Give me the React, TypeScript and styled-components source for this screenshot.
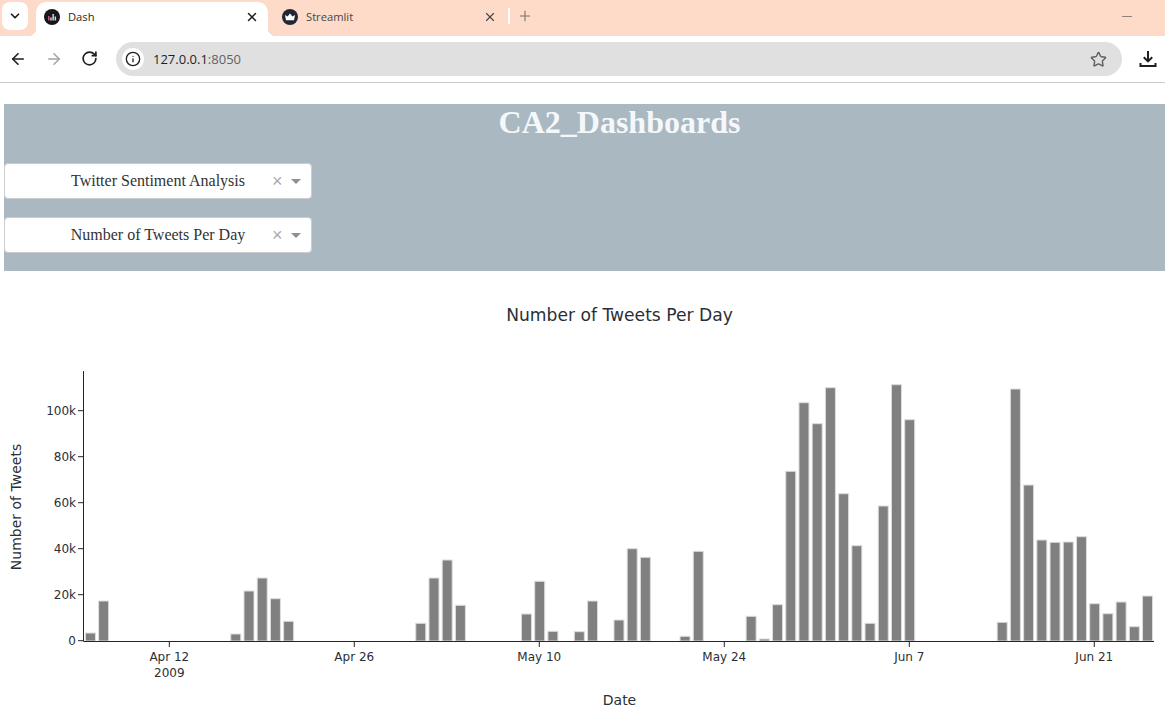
import React from 'react'
import styled, { createGlobalStyle } from 'styled-components'
import { ArrowLeft, ArrowRight, ChevronDown, Info, Plus, RotateCw, Star, X } from 'lucide-react'

const GlobalStyle = createGlobalStyle`
  html,
  body {
    margin: 0;
    padding: 0;
    height: 716px;
    overflow: hidden;
    background: #fff;
  }
`

const PEACH = '#fddbc8'

const Window = styled.div`
  width: 1165px;
  height: 716px;
  display: flex;
  flex-direction: column;
  overflow: hidden;
`

const TabStrip = styled.div`
  height: 36px;
  flex: none;
  display: flex;
  align-items: flex-end;
  padding-left: 2px;
  background: ${PEACH};
  color: #3c3c3c;
`

const TabSearch = styled.div`
  width: 26px;
  height: 28px;
  margin: 0 8px 6px 0;
  display: flex;
  align-items: center;
  justify-content: center;
  border-radius: 8px;
  background: #fff;
  color: #1f1f1f;
`

const Tab = styled.div<{ $active?: boolean }>`
  position: relative;
  width: ${({ $active }) => ($active ? '232px' : '240px')};
  height: 34px;
  display: flex;
  align-items: center;
  padding: 0 ${({ $active }) => ($active ? '9px' : '11px')} 4px ${({ $active }) => ($active ? '8px' : '14px')};
  box-sizing: border-box;
  border-radius: 10px 10px 0 0;
  background: ${({ $active }) => ($active ? '#fff' : 'transparent')};
  color: ${({ $active }) => ($active ? '#1f1f1f' : '#474747')};

  ${({ $active }) =>
    $active &&
    `
    &::before,
    &::after {
      content: '';
      position: absolute;
      bottom: 0;
      width: 8px;
      height: 8px;
    }
    &::before {
      left: -8px;
      background: radial-gradient(circle at 0 0, ${PEACH} 8px, #fff 8.5px);
    }
    &::after {
      right: -8px;
      background: radial-gradient(circle at 100% 0, ${PEACH} 8px, #fff 8.5px);
    }
  `}
`

const TabTitle = styled.span`
  flex: 1;
  margin-left: 8px;
  font: 11.2px/16px 'Open Sans', 'Noto Sans', sans-serif;
`

const TabClose = styled.span`
  display: flex;
  color: inherit;
`

const TabDivider = styled.div`
  width: 2px;
  height: 16px;
  margin: 0 7px 12px 0;
  background: #fff;
`

const NewTab = styled.div`
  display: flex;
  margin-bottom: 12px;
  color: #7b706a;
`

const MinimizeGlyph = styled.div`
  width: 10px;
  height: 1px;
  margin: 0 33px 19px auto;
  background: #8f8580;
`

const Toolbar = styled.div`
  height: 47px;
  flex: none;
  display: flex;
  align-items: center;
  padding-left: 9px;
  box-sizing: border-box;
  border-bottom: 1px solid #cdcdcd;
  background: #fff;
`

const NavButton = styled.div<{ $muted?: boolean }>`
  width: 18px;
  height: 18px;
  margin-right: 18px;
  display: flex;
  color: ${({ $muted }) => ($muted ? '#a3a3a3' : '#1f1f1f')};
`

const Omnibox = styled.div`
  width: 1006px;
  height: 34px;
  margin-left: -1px;
  display: flex;
  align-items: center;
  padding: 0 15px 0 6px;
  box-sizing: border-box;
  border-radius: 17px;
  background: #e0e0e0;
`

const SiteInfo = styled.div`
  width: 22px;
  height: 22px;
  display: flex;
  align-items: center;
  justify-content: center;
  border-radius: 50%;
  background: #fff;
  color: #1f1f1f;
`

const Url = styled.div`
  flex: 1;
  margin-left: 9px;
  font: 13px/18px 'Open Sans', 'Noto Sans', sans-serif;
  color: #1f1f1f;

  span {
    color: #5f6368;
  }
`

const DownloadButton = styled.div`
  width: 20px;
  height: 20px;
  margin-left: 16px;
  display: flex;
  color: #1f1f1f;
`

const Page = styled.div`
  flex: 1;
  padding: 21px 0 0 4px;
`

const Banner = styled.div`
  height: 167px;
  padding-bottom: 18px;
  box-sizing: border-box;
  display: flex;
  flex-direction: column;
  background: #aab8c2;
`

const Heading = styled.h1`
  margin: 0 0 22px;
  padding-left: 70px;
  font: bold 32px/37px 'Liberation Serif', 'Times New Roman', serif;
  text-align: center;
  color: #f5f8fa;
`

const Dropdown = styled.div`
  width: 308px;
  height: 36px;
  flex: none;
  margin-bottom: 18px;
  display: flex;
  align-items: center;
  box-sizing: border-box;
  padding-left: 50px;
  border: 1px solid #ccc;
  border-radius: 4px;
  background: #fff;

  &:last-child {
    margin-bottom: 0;
  }
`

const DropdownValue = styled.div`
  flex: 1;
  font: 16px/34px 'Liberation Serif', 'Times New Roman', serif;
  text-align: center;
  white-space: nowrap;
  color: #333;
`

const DropdownControls = styled.div`
  width: 50px;
  flex: none;
  display: flex;
  align-items: center;
  padding-left: 11px;
  box-sizing: border-box;
`

const ClearMark = styled.span`
  width: 19px;
  font: 18px/18px 'Liberation Sans', Arial, sans-serif;
  color: #aaa;
`

const Caret = styled.span`
  width: 0;
  height: 0;
  border-style: solid;
  border-width: 5px 5px 0;
  border-color: #909090 transparent transparent;
`

const Chart = styled.svg`
  display: block;
  font-family: 'DejaVu Sans', Verdana, sans-serif;
`

const Bar = styled.rect`
  fill: #808080;
  stroke: #ddd;
  stroke-width: 1px;
`

const AxisLine = styled.path`
  fill: none;
  stroke: #242424;
  stroke-width: 1px;
`

const ChartText = styled.text<{ $size: number }>`
  font-size: ${({ $size }) => $size}px;
  fill: #2a2f36;
`

// day offset from Apr 12, y of the bar top as read from the picture
const bars: [number, number][] = [
  [-6, 633], [-5, 601], [5, 634], [6, 591], [7, 578], [8, 598.7], [9, 621.3],
  [19, 623.3], [20, 578], [21, 560], [22, 605.3], [27, 614], [28, 581.3], [29, 631.3],
  [31, 631.7], [32, 601], [34, 620], [35, 548.7], [36, 557.3], [39, 636.3], [40, 551.3],
  [44, 616.3], [45, 639], [46, 604.7], [47, 471.3], [48, 402.7], [49, 423.7], [50, 387.7],
  [51, 493.7], [52, 545.7], [53, 623.3], [54, 506], [55, 384.7], [56, 419.7],
  [63, 622.3], [64, 389], [65, 485], [66, 540], [67, 542.3], [68, 542], [69, 536.7],
  [70, 603.7], [71, 613.7], [72, 602], [73, 626.7], [74, 596],
]

const DAY = 13.214
const X0 = 169.3
const BASE = 641
const dayX = (d: number) => X0 + d * DAY

const yTicks = [
  { label: '0', y: 640.7 },
  { label: '20k', y: 594.7 },
  { label: '40k', y: 548.7 },
  { label: '60k', y: 502.7 },
  { label: '80k', y: 456.7 },
  { label: '100k', y: 410.7 },
]

const xTicks = [
  { label: 'Apr 12', day: 0 },
  { label: 'Apr 26', day: 14 },
  { label: 'May 10', day: 28 },
  { label: 'May 24', day: 42 },
  { label: 'Jun 7', day: 56 },
  { label: 'Jun 21', day: 70 },
]

const DashIcon = () => (
  <svg width="16" height="16" viewBox="0 0 16 16">
    <circle cx="8" cy="8" r="8" fill="#15171c" />
    <path d="M4 7h1.500v4.500H4z" fill="#c8557b" />
    <path d="M6.200 8.500h1.500v3H6.200zM8.400 5h1.500v6.500H8.400zM10.600 7.500h1.500v4h-1.500z" fill="#d8d8d8" />
  </svg>
)

const StreamlitIcon = () => (
  <svg width="16" height="16" viewBox="0 0 16 16">
    <circle cx="8" cy="8" r="8" fill="#232634" />
    <path d="M3 6l2.600 1.500L8 4.500l2.400 3L13 6l-1 5.200H4z" fill="#fff" />
  </svg>
)

const DownloadIcon = () => (
  <svg width="20" height="20" viewBox="0 0 20 20" fill="none" stroke="currentColor" strokeWidth="2">
    <path d="M10 2v10" />
    <path d="M5.800 8.200L10 12.400l4.200-4.200" />
    <path d="M2.500 14v3h15v-3" />
  </svg>
)

const App: React.FC = () => {
  return (
    <Window>
      <GlobalStyle />
      <TabStrip>
        <TabSearch>
          <ChevronDown size={14} strokeWidth={3} />
        </TabSearch>
        <Tab $active>
          <DashIcon />
          <TabTitle>Dash</TabTitle>
          <TabClose>
            <X size={14} strokeWidth={2.5} />
          </TabClose>
        </Tab>
        <Tab>
          <StreamlitIcon />
          <TabTitle>Streamlit</TabTitle>
          <TabClose>
            <X size={14} strokeWidth={2} />
          </TabClose>
        </Tab>
        <TabDivider />
        <NewTab>
          <Plus size={16} strokeWidth={1.6} />
        </NewTab>
        <MinimizeGlyph />
      </TabStrip>

      <Toolbar>
        <NavButton>
          <ArrowLeft size={18} strokeWidth={2.2} />
        </NavButton>
        <NavButton $muted>
          <ArrowRight size={18} strokeWidth={2} />
        </NavButton>
        <NavButton>
          <RotateCw size={17} strokeWidth={2.4} />
        </NavButton>
        <Omnibox>
          <SiteInfo>
            <Info size={16} strokeWidth={2} />
          </SiteInfo>
          <Url>
            127.0.0.1<span>:8050</span>
          </Url>
          <Star size={17} strokeWidth={2} color="#5f5f5f" />
        </Omnibox>
        <DownloadButton>
          <DownloadIcon />
        </DownloadButton>
      </Toolbar>

      <Page>
        <Banner>
          <Heading>CA2_Dashboards</Heading>
          <Dropdown>
            <DropdownValue>Twitter Sentiment Analysis</DropdownValue>
            <DropdownControls>
              <ClearMark>×</ClearMark>
              <Caret />
            </DropdownControls>
          </Dropdown>
          <Dropdown>
            <DropdownValue>Number of Tweets Per Day</DropdownValue>
            <DropdownControls>
              <ClearMark>×</ClearMark>
              <Caret />
            </DropdownControls>
          </Dropdown>
        </Banner>

        <Chart width="1161" height="445" viewBox="4 271 1161 445">
          <ChartText $size={17.15} x="619.5" y="320.500" textAnchor="middle">
            Number of Tweets Per Day
          </ChartText>

          {bars.map(([day, top]) => (
            <Bar key={day} x={dayX(day) - 4.6} y={top} width="10" height={BASE - top} />
          ))}

          <AxisLine d="M83.500 371V641.500H1154" />
          {yTicks.map((t) => (
            <g key={t.label}>
              <AxisLine d={`M78 ${t.y}H83`} />
              <ChartText $size={12} x="76" y={t.y + 4} textAnchor="end">
                {t.label}
              </ChartText>
            </g>
          ))}
          {xTicks.map((t) => (
            <g key={t.label}>
              <AxisLine d={`M${dayX(t.day)} 642V647`} />
              <ChartText $size={12} x={dayX(t.day)} y="661" textAnchor="middle">
                {t.label}
              </ChartText>
            </g>
          ))}
          <ChartText $size={12} x={dayX(0)} y="677" textAnchor="middle">
            2009
          </ChartText>

          <ChartText $size={14} x="619.5" y="705" textAnchor="middle">
            Date
          </ChartText>
          <ChartText $size={14} x="21" y="507" textAnchor="middle" transform="rotate(-90 21 507)">
            Number of Tweets
          </ChartText>
        </Chart>
      </Page>
    </Window>
  )
}

export default App
